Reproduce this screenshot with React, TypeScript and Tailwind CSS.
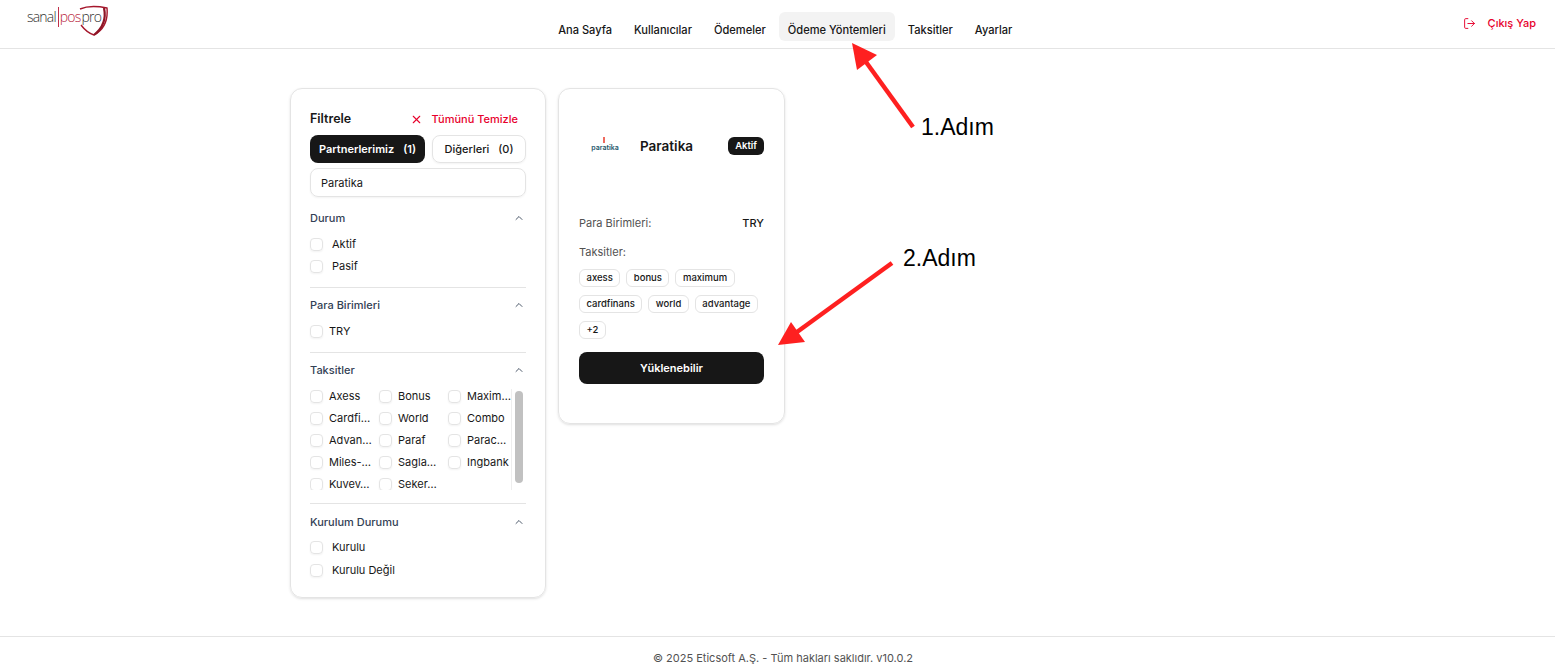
import { ChevronUp, LogOut, X } from "lucide-react"

const navItems = ["Ana Sayfa", "Kullanıcılar", "Ödemeler", "Ödeme Yöntemleri", "Taksitler", "Ayarlar"]

const installments = [
  "Axess", "Bonus", "Maxim…",
  "Cardfi…", "World", "Combo",
  "Advan…", "Paraf", "Parac…",
  "Miles-…", "Sagla…", "Ingbank",
  "Kuvev…", "Seker…",
]

const chips = ["axess", "bonus", "maximum", "cardfinans", "world", "advantage", "+2"]

function Logo() {
  return (
    <div className="relative h-[36px] w-[81px]">
      <span className="absolute left-0 top-[7px] flex whitespace-nowrap font-['Open_Sans',sans-serif] text-[14px] font-light leading-[20px] tracking-[-0.8px] text-[#333]">
        <span>sanal</span>
        <span className="ml-[2px] border-l border-[#c0304a] pl-[1px] text-[#b8243c]">pos</span>
        <span className="ml-[1px]">pro</span>
      </span>
      <svg className="absolute left-[52px] top-[5px]" width="30" height="32" viewBox="0 0 30 32" fill="none">
        <path d="M1 4 C8 1 18 1 28 3 C29 14 26 24 15 30 C9 28 5 24 2 20" stroke="#a5172c" strokeWidth="1.4" />
        <path d="M25 3 C27 12 25 22 15 30" stroke="#8f1526" strokeWidth="2.2" />
      </svg>
    </div>
  )
}

function Header() {
  return (
    <header className="flex h-[49px] shrink-0 items-start justify-between border-b border-[#e4e4e4] pl-[27px] pr-[19px]">
      <Logo />
      <nav className="mt-[12px] flex gap-1">
        {navItems.map((item) => (
          <a
            key={item}
            className={`flex h-[29px] items-center whitespace-nowrap rounded-md px-[9px] pt-[8px] text-[11.1px] font-medium text-[#171717] ${item === "Ödeme Yöntemleri" ? "bg-[#f3f3f3]" : ""}`}
          >
            {item}
          </a>
        ))}
      </nav>
      <a className="mt-[15px] flex items-center gap-[12px] text-[11px] font-medium leading-[16px] text-[#e7002b]">
        <LogOut size={13} strokeWidth={1.75} />
        Çıkış Yap
      </a>
    </header>
  )
}

function Check({ label, gap = "gap-[9px]" }: { label: string; gap?: string }) {
  return (
    <label className={`flex h-[22px] items-center whitespace-nowrap text-[11px] text-[#171717] ${gap}`}>
      <span className="h-[13px] w-[13px] shrink-0 rounded-[4px] border border-[#e4e4e4] shadow-xs" />
      {label}
    </label>
  )
}

function Section({ title, children, last }: { title: string; children: React.ReactNode; last?: boolean }) {
  return (
    <section className={last ? "" : "border-b border-[#e4e4e4]"}>
      <div className="flex h-[18px] items-center justify-between pr-px text-[11px] font-medium text-[#334155]">
        {title}
        <ChevronUp size={12} strokeWidth={1.75} />
      </div>
      {children}
    </section>
  )
}

function FilterCard() {
  return (
    <aside className="h-[510px] w-[256px] rounded-xl border border-[#e4e4e4] px-[19px] pt-[20px] shadow-sm">
      <div className="flex h-[20px] items-center justify-between pr-[8px]">
        <h2 className="text-[12.5px] font-semibold text-[#171717]">Filtrele</h2>
        <button className="flex items-center gap-[8px] text-[11px] font-medium text-[#e7002b]">
          <X size={13} strokeWidth={2} />
          Tümünü Temizle
        </button>
      </div>

      <div className="mt-[6px] flex gap-[7px]">
        <button className="flex h-[28px] w-[115px] items-center justify-center gap-[9px] rounded-lg bg-[#171717] text-[11px] font-semibold text-white">
          <span>Partnerlerimiz</span>
          <span>(1)</span>
        </button>
        <button className="flex h-[28px] w-[94px] items-center justify-center gap-[9px] rounded-lg border border-[#e4e4e4] text-[11px] font-medium text-[#171717] shadow-xs">
          <span>Diğerleri</span>
          <span>(0)</span>
        </button>
      </div>

      <div className="mt-[5px] flex h-[29px] items-center rounded-lg border border-[#e4e4e4] px-[10px] pt-[1px] text-[11px] text-[#171717] shadow-xs">
        Paratika
      </div>

      <div className="mt-[12px]">
        <Section title="Durum">
          <div className="mb-[10px] mt-[6px]">
            <Check label="Aktif" />
            <Check label="Pasif" />
          </div>
        </Section>
      </div>

      <div className="mt-[8px]">
        <Section title="Para Birimleri">
          <div className="mb-[10px] mt-[6px]">
            <Check label="TRY" gap="gap-[6px]" />
          </div>
        </Section>
      </div>

      <div className="mt-[8px]">
        <Section title="Taksitler">
          <div className="mb-[13px] mt-[10px] flex h-[101px] overflow-hidden">
            <div className="-mt-[4px] grid h-[112px] w-[201px] shrink-0 grid-cols-[69px_69px_63px] content-start">
              {installments.map((item) => (
                <Check key={item} label={item} gap="gap-[6px]" />
              ))}
            </div>
            <div className="h-full w-[15px] border-l border-[#eeeeee] pl-[3px] pt-[2px]">
              <div className="h-[92px] w-[8px] rounded-full bg-[#c1c1c1]" />
            </div>
          </div>
        </Section>
      </div>

      <div className="mt-[9px]">
        <Section title="Kurulum Durumu" last>
          <div className="mt-[5px] flex flex-col gap-[1px]">
            <Check label="Kurulu" />
            <Check label="Kurulu Değil" />
          </div>
        </Section>
      </div>
    </aside>
  )
}

function PaymentCard() {
  return (
    <article className="h-[336px] w-[227px] rounded-xl border border-[#e4e4e4] px-[20px] shadow-sm">
      <div className="mt-[48px] flex h-[18px] items-center">
        <div className="relative flex h-[18px] w-[61px] flex-col items-center pr-[9px] pt-[3px]">
          <span className="absolute left-[24px] top-0 h-[6px] w-[2px] bg-[#ef6a5e]" />
          <span className="mt-[3px] text-[7px] font-semibold leading-[10px] text-[#24566a]">paratika</span>
        </div>
        <h3 className="text-[13.5px] font-semibold text-[#171717]">Paratika</h3>
        <span className="ml-auto rounded-md bg-[#171717] px-[7px] text-[9.5px] font-semibold leading-[18px] text-white">
          Aktif
        </span>
      </div>

      <div className="mt-[59px] flex h-[18px] items-center justify-between text-[11px]">
        <span className="text-[#525252]">Para Birimleri:</span>
        <span className="font-medium text-[#171717]">TRY</span>
      </div>

      <div className="mt-[11px] flex h-[18px] items-center text-[11px] text-[#525252]">Taksitler:</div>

      <div className="mt-[8px] flex flex-wrap gap-x-[6px] gap-y-[8px]">
        {chips.map((chip) => (
          <span
            key={chip}
            className="h-[18px] rounded-md border border-[#e4e4e4] px-[6.5px] text-[9.5px] font-medium leading-[16px] text-[#171717]"
          >
            {chip}
          </span>
        ))}
      </div>

      <button className="mt-[13px] h-[32px] w-full rounded-lg bg-[#171717] text-[11px] font-semibold text-white">
        Yüklenebilir
      </button>
    </article>
  )
}

function Annotations() {
  return (
    <>
      <svg className="pointer-events-none absolute left-0 top-0" width="1555" height="668" fill="none">
        <line x1="913" y1="127" x2="866" y2="62" stroke="#fe2020" strokeWidth="4.5" />
        <polygon points="852,43 877,55 857,70" fill="#fe2020" />
        <line x1="892" y1="263" x2="797" y2="332" stroke="#fe2020" strokeWidth="4.5" />
        <polygon points="778,345 791,322 805,342" fill="#fe2020" />
      </svg>
      <span className="absolute left-[921px] top-[113px] font-['Liberation_Sans',sans-serif] text-[23px] leading-[28px] text-black">
        1.Adım
      </span>
      <span className="absolute left-[903px] top-[244px] font-['Liberation_Sans',sans-serif] text-[23px] leading-[28px] text-black">
        2.Adım
      </span>
    </>
  )
}

export default function App() {
  return (
    <div className="relative flex h-[668px] flex-col overflow-hidden bg-white font-['Inter',sans-serif]">
      <Header />
      <main className="mx-auto flex w-[975px] flex-1 items-start gap-3 pt-[39px]">
        <FilterCard />
        <PaymentCard />
      </main>
      <footer className="flex h-[32px] shrink-0 items-center justify-center border-t border-[#e4e4e4] pl-[11px] pt-[11px] text-[11px] text-[#525252]">
        © 2025 Eticsoft A.Ş. - Tüm hakları saklıdır. v10.0.2
      </footer>
      <Annotations />
    </div>
  )
}
